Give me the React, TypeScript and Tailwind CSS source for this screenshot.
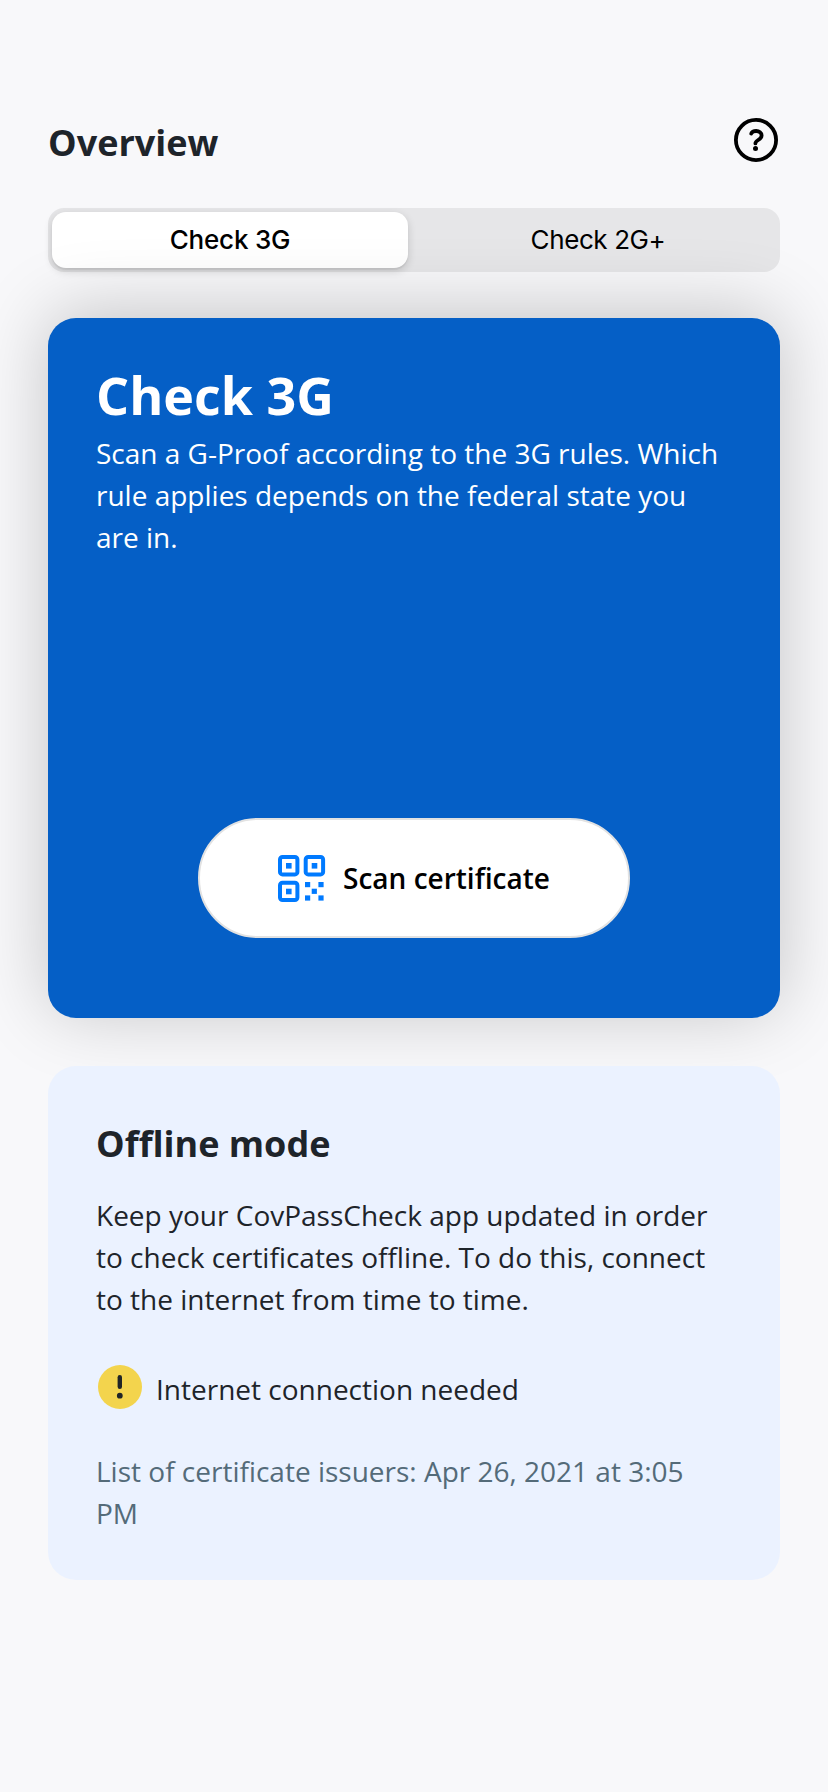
import React from "react";

function QrIcon() {
  return (
    <svg width="48" height="48" viewBox="0 0 48 48" fill="none" className="mt-0.5 block">
      <g stroke="#007aff" strokeWidth="4">
        <rect x="2" y="2" width="17.4" height="17.4" rx="2.5" />
        <rect x="27.7" y="2" width="17.4" height="17.4" rx="2.5" />
        <rect x="2" y="27.7" width="17.4" height="17.4" rx="2.5" />
      </g>
      <g fill="#007aff">
        <rect x="8" y="8" width="5.6" height="5.6" />
        <rect x="33.7" y="8" width="5.6" height="5.6" />
        <rect x="8" y="33.7" width="5.6" height="5.6" />
        <rect x="27" y="27" width="5.2" height="5.2" />
        <rect x="40.4" y="27" width="5.2" height="5.2" />
        <rect x="33.7" y="33.7" width="5.2" height="5.2" />
        <rect x="27" y="40.4" width="5.2" height="5.2" />
        <rect x="40.4" y="40.4" width="5.2" height="5.2" />
      </g>
    </svg>
  );
}

function HelpIcon() {
  return (
    <svg width="48" height="48" viewBox="0 0 48 48" fill="none" stroke="black" strokeWidth="3.8" strokeLinecap="round" strokeLinejoin="round" className="-mt-1">
      <circle cx="24" cy="24" r="20.1" />
      <path d="M19.2 17.6C20 15.6 22 15 24.2 15c3 0 5.4 1.7 5.4 4.4 0 4.4-6.2 4.6-6.2 8" />
      <circle cx="23.5" cy="32.6" r="2.5" fill="black" stroke="none" />
    </svg>
  );
}

function WarningIcon() {
  return (
    <svg width="48" height="48" viewBox="0 0 48 48" className="mt-0.5 block">
      <circle cx="24" cy="24" r="22" fill="#f3d44d" />
      <path d="M23.8 14.3v9.4" stroke="#1f2427" strokeWidth="4.4" strokeLinecap="round" />
      <circle cx="23.8" cy="32.7" r="2.9" fill="#1f2427" />
    </svg>
  );
}

export default function App() {
  return (
    <main className="flex h-[1792px] w-[828px] flex-col bg-[#f8f8fa] px-12 pt-[112px] font-['Open_Sans',sans-serif] text-[#1e242a]">
      <header className="flex h-[60px] items-center justify-between">
        <h1 className="pt-0.5 text-[36px] leading-[60px] font-bold">Overview</h1>
        <HelpIcon />
      </header>
      <div className="mt-9 flex h-16 rounded-[16px] bg-[#e6e6e8] p-1 font-['Inter',sans-serif] text-[26px] tracking-[-0.2px] text-black">
        <button className="w-[356px] rounded-[14px] bg-white pb-0.5 font-medium shadow-[0_3px_8px_rgba(0,0,0,0.16),0_2px_1px_rgba(0,0,0,0.05)]">Check 3G</button>
        <button className="flex-1 pb-0.5 pl-3 tracking-[-0.4px]">Check 2G+</button>
      </div>
      <section className="mt-[46px] flex h-[700px] flex-col rounded-[28px] bg-[#055fc6] px-12 pt-[45px] text-white shadow-[0_-6px_72px_rgba(0,0,0,0.21)]">
        <h2 className="text-[52px] leading-[64px] font-bold">Check 3G</h2>
        <p className="mt-[5px] text-[28px] leading-[42px]">Scan a G-Proof according to the 3G rules. Which<br />rule applies depends on the federal state you<br />are in.</p>
        <button className="mt-auto mb-20 flex h-[120px] w-[432px] items-center justify-center gap-[17px] self-center rounded-full border-2 border-[#e2e2e2] bg-white text-[28px] font-semibold text-black"><QrIcon />Scan certificate</button>
      </section>
      <section className="mt-12 h-[514px] rounded-[28px] bg-[#ebf2ff] px-12 pt-12">
        <h2 className="text-[36px] leading-[60px] font-bold">Offline mode</h2>
        <p className="mt-5 text-[28px] leading-[42px]">Keep your CovPassCheck app updated in order<br />to check certificates offline. To do this, connect<br />to the internet from time to time.</p>
        <div className="mt-[38px] flex h-14 items-center gap-3 text-[28px]">
          <WarningIcon />
          <span className="pt-1.5">Internet connection needed</span>
        </div>
        <p className="mt-9 text-[28px] leading-[42px] text-[#546b79]">List of certificate issuers: Apr 26, 2021 at 3:05<br />PM</p>
      </section>
    </main>
  );
}
